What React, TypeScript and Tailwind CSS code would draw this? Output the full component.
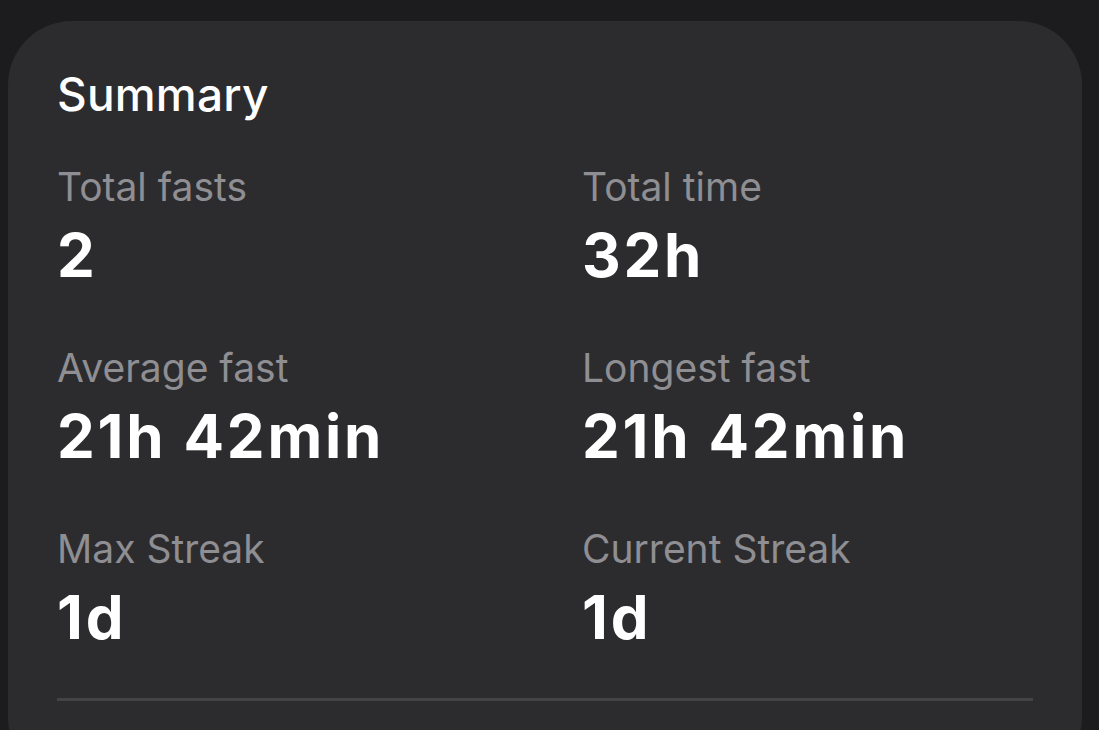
import React from "react";

const stats = [
  { label: "Total fasts", value: "2" },
  { label: "Total time", value: "32h" },
  { label: "Average fast", value: "21h 42min" },
  { label: "Longest fast", value: "21h 42min" },
  { label: "Max Streak", value: "1d" },
  { label: "Current Streak", value: "1d" },
];

export default function App() {
  return (
    <div
      className="w-[1099px] h-[730px] overflow-hidden bg-[#1c1c1e] pt-[21px] pl-[8px] pr-[17px]"
      style={{ fontFamily: "Inter, 'Noto Sans', sans-serif" }}
    >
      <div className="h-[760px] rounded-[64px] bg-[#2c2c2e] pl-[49px] pr-[49px] pt-[45px]">
        <h2 className="text-[46px] leading-[56px] font-medium text-white tracking-[0.2px]">
          Summary
        </h2>
        <div className="grid grid-cols-[525px_1fr] mt-[40px]">
          {stats.map((s) => (
            <div key={s.label} className="h-[181px]">
              <div className="text-[39px] leading-[50px] text-[#8e8e93]">{s.label}</div>
              <div className="text-[60px] leading-[72px] font-bold text-white mt-[7px] tracking-[2.8px]">
                {s.value}
              </div>
            </div>
          ))}
        </div>
        <div className="mt-[-7px] h-[3px] bg-[#444446]" />
      </div>
    </div>
  );
}
